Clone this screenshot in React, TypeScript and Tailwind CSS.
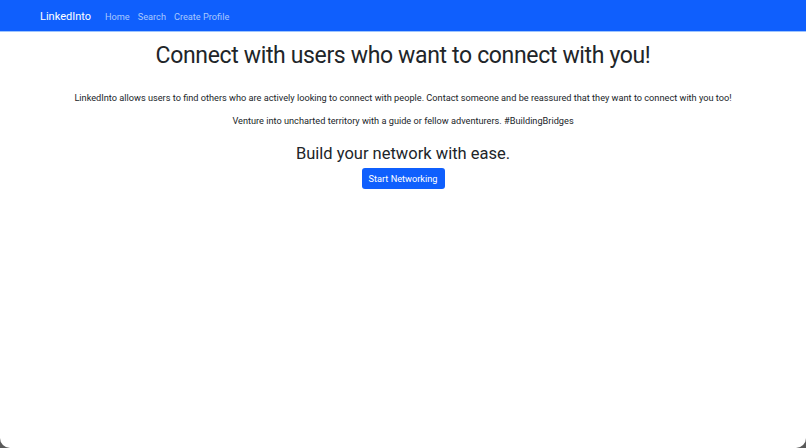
import React from "react";

export default function App() {
  return (
    <div className="w-[806px] h-[448px] bg-[#5a5a5a] overflow-hidden" style={{ fontFamily: "Roboto, 'Liberation Sans', sans-serif" }}>
      <div className="w-full h-full bg-white rounded-b-[10px] overflow-hidden text-[#212529]">
        <nav className="h-[32px] bg-[#0f5ffd] border-b border-[#9ec5fe] flex items-center pl-[40px] pt-[2px]">
          <span className="text-white text-[11px] leading-[14px] mr-[14px]">LinkedInto</span>
          <div className="flex gap-[8px] text-[9.2px] leading-[14px] text-[#a9c8fe]">
            <span>Home</span>
            <span>Search</span>
            <span>Create Profile</span>
          </div>
        </nav>
        <div className="flex flex-col items-center text-center">
          <h1 className="text-[23px] tracking-[-0.35px] font-normal mt-[9px] leading-[30px]">Connect with users who want to connect with you!</h1>
          <p className="text-[9.2px] mt-[20px] leading-[14px]">LinkedInto allows users to find others who are actively looking to connect with people. Contact someone and be reassured that they want to connect with you too!</p>
          <p className="text-[9.2px] mt-[9px] leading-[14px]">Venture into uncharted territory with a guide or fellow adventurers. #BuildingBridges</p>
          <h3 className="text-[16.5px] font-normal mt-[16px] leading-[20px]">Build your network with ease.</h3>
          <button className="mt-[4px] bg-[#0f5ffd] text-white text-[9.2px] rounded-[3px] w-[83px] h-[21px]">Start Networking</button>
        </div>
      </div>
    </div>
  );
}
